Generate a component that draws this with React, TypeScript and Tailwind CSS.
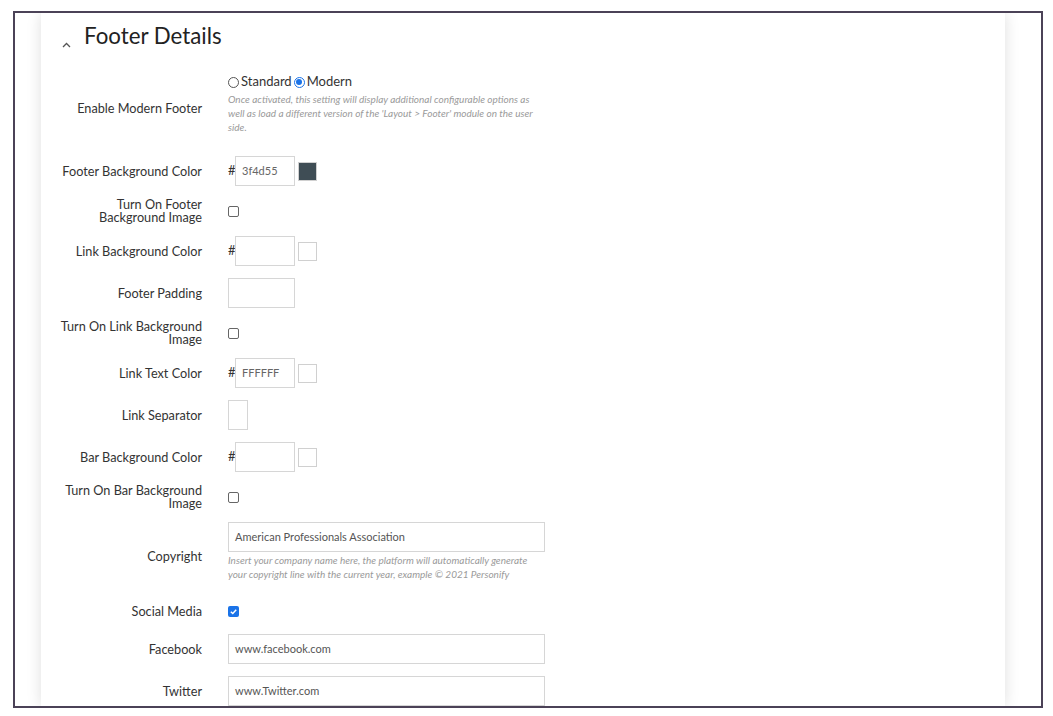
import React from "react";

const font = { fontFamily: "Lato, 'Open Sans', Arial, sans-serif" };

function Label({ children }: { children: React.ReactNode }) {
  return (
    <div className="w-[146px] shrink-0 text-right text-[12.7px] leading-[13px] text-[#333]">
      {children}
    </div>
  );
}

function Checkbox({ checked }: { checked?: boolean }) {
  if (checked) {
    return (
      <div className="w-[11px] h-[11px] rounded-[2px] bg-[#1a73e8] flex items-center justify-center">
        <svg width="9" height="9" viewBox="0 0 10 10">
          <path d="M2 5.2 L4.2 7.3 L8 3" fill="none" stroke="white" strokeWidth="1.6" />
        </svg>
      </div>
    );
  }
  return <div className="w-[11px] h-[11px] rounded-[2px] border border-[#666] bg-white" />;
}

function ColorInput({ value, swatch }: { value?: string; swatch?: string }) {
  return (
    <div className="flex items-center">
      <span className="text-[13px] text-[#333] w-[7px]">#</span>
      <div className="w-[60px] h-[30px] border border-[#d6d6d6] bg-white flex items-center pl-[6px] text-[11px] text-[#666]">
        {value}
      </div>
      <div
        className="ml-[3px] w-[19px] h-[19px] border border-[#d0d0d0]"
        style={{ backgroundColor: swatch ?? "#ffffff" }}
      />
    </div>
  );
}

function Row({
  label,
  children,
  h,
}: {
  label: React.ReactNode;
  children: React.ReactNode;
  h: string;
}) {
  return (
    <div className={`flex items-center ${h}`}>
      <Label>{label}</Label>
      <div className="ml-[26px] flex items-center">{children}</div>
    </div>
  );
}

function TextInput({ value, w }: { value?: string; w: string }) {
  return (
    <div
      className={`${w} h-[30px] border border-[#d6d6d6] bg-white flex items-center pl-[6px] text-[11px] text-[#555]`}
    >
      {value}
    </div>
  );
}

export default function App() {
  return (
    <div className="w-[1053px] h-[716px] bg-white overflow-hidden" style={font}>
      <div className="ml-[13px] mt-[11px] w-[1030px] h-[697px] border-2 border-[#4b4257] overflow-hidden bg-white">
        <div className="ml-[26px] mr-[36px] h-full bg-white shadow-[0_0_14px_rgba(0,0,0,0.13)] pl-[15px]">
          {/* Title */}
          <div className="h-[57px] flex items-center">
            <svg width="9" height="6" viewBox="0 0 9 6" className="ml-[6px] mt-[6px]">
              <path d="M1 5 L4.5 1.5 L8 5" fill="none" stroke="#555" strokeWidth="1.3" />
            </svg>
            <div className="ml-[13px] text-[22.3px] text-[#222] leading-none -mt-[11px]">
              Footer Details
            </div>
          </div>

          <div className="flex flex-col gap-[12px]">
            {/* Enable Modern Footer */}
            <div className="flex h-[74px]">
              <div className="self-center mt-[3px]">
                <Label>Enable Modern Footer</Label>
              </div>
              <div className="ml-[26px] pt-[5px]">
                <div className="flex items-center text-[13px] text-[#333] h-[14px]">
                  <div className="w-[11px] h-[11px] rounded-full border border-[#555] bg-white" />
                  <span className="ml-[2px]">Standard</span>
                  <div className="ml-[2px] w-[11px] h-[11px] rounded-full border border-[#1a73e8] flex items-center justify-center">
                    <div className="w-[6px] h-[6px] rounded-full bg-[#1a73e8]" />
                  </div>
                  <span className="ml-[2px]">Modern</span>
                </div>
                <div className="mt-[3px] w-[310px] text-[10px] leading-[14px] italic text-[#9a9a9a]">
                  Once activated, this setting will display additional configurable options as well
                  as load a different version of the 'Layout &gt; Footer' module on the user side.
                </div>
              </div>
            </div>

            <Row label="Footer Background Color" h="h-[30px]">
              <ColorInput value="3f4d55" swatch="#3f4d55" />
            </Row>
            <Row label="Turn On Footer Background Image" h="h-[26px]">
              <Checkbox />
            </Row>
            <Row label="Link Background Color" h="h-[30px]">
              <ColorInput />
            </Row>
            <Row label="Footer Padding" h="h-[30px]">
              <TextInput w="w-[67px]" />
            </Row>
            <Row label="Turn On Link Background Image" h="h-[26px]">
              <Checkbox />
            </Row>
            <Row label="Link Text Color" h="h-[30px]">
              <ColorInput value="FFFFFF" />
            </Row>
            <Row label="Link Separator" h="h-[30px]">
              <TextInput w="w-[20px]" />
            </Row>
            <Row label="Bar Background Color" h="h-[30px]">
              <ColorInput />
            </Row>
            <Row label="Turn On Bar Background Image" h="h-[26px]">
              <Checkbox />
            </Row>

            {/* Copyright */}
            <div className="flex items-center h-[66px]">
              <div className="mt-[2px]">
                <Label>Copyright</Label>
              </div>
              <div className="ml-[26px] self-start">
                <TextInput w="w-[317px]" value="American Professionals Association" />
                <div className="mt-[1px] w-[317px] text-[10px] leading-[14px] italic text-[#9a9a9a]">
                  Insert your company name here, the platform will automatically generate your
                  copyright line with the current year, example © 2021 Personify
                </div>
              </div>
            </div>

            <Row label="Social Media" h="h-[22px]">
              <Checkbox checked />
            </Row>
            <Row label="Facebook" h="h-[30px]">
              <TextInput w="w-[317px]" value="www.facebook.com" />
            </Row>
            <Row label="Twitter" h="h-[30px]">
              <TextInput w="w-[317px]" value="www.Twitter.com" />
            </Row>
          </div>
        </div>
      </div>
    </div>
  );
}
